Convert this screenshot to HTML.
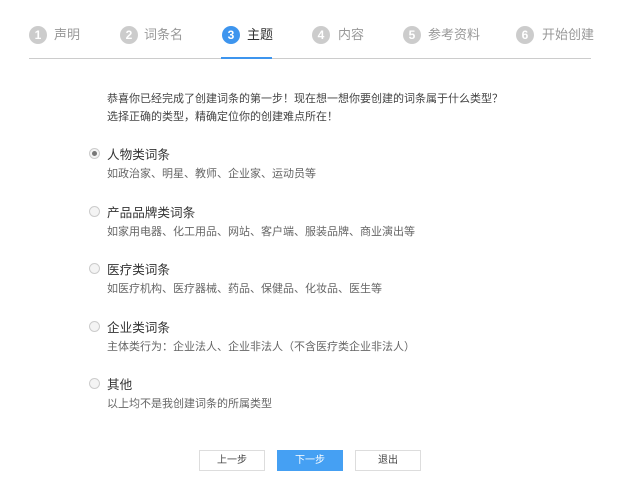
<!DOCTYPE html>
<html><head><meta charset="utf-8"><style>
body{margin:0;width:640px;height:484px;background:#fff;font-family:"Liberation Sans","Noto Sans CJK SC",sans-serif;position:relative;overflow:hidden}
.a{position:absolute;white-space:nowrap}
.c{position:absolute;top:26px;width:18px;height:18px;border-radius:50%;background:#ccc;color:#fff;font-size:12px;line-height:18px;text-align:center;font-weight:bold}
.s{position:absolute;top:26px;font-size:13px;line-height:18px;color:#999}
.r{position:absolute;left:89px;width:9px;height:9px;border:1px solid #ccc;border-radius:50%;background:#f4f4f4}
.t{position:absolute;left:107px;font-size:12.6px;color:#333}
.d{position:absolute;left:107px;font-size:11px;color:#666}
.b{position:absolute;top:450px;width:64px;height:19px;border:1px solid #ddd;font-size:10px;line-height:19px;text-align:center;color:#444;background:#fff}
</style></head><body>
<div class="c" style="left:29px">1</div><div class="s" style="left:54px">声明</div>
<div class="c" style="left:120px">2</div><div class="s" style="left:144px">词条名</div>
<div class="c" style="left:222px;background:#3e95ee">3</div><div class="s" style="left:247px;color:#333">主题</div>
<div class="c" style="left:312px">4</div><div class="s" style="left:338px">内容</div>
<div class="c" style="left:403px">5</div><div class="s" style="left:428px">参考资料</div>
<div class="c" style="left:516px">6</div><div class="s" style="left:542px">开始创建</div>
<div class="a" style="left:29px;top:58px;width:562px;height:1px;background:#ccc"></div>
<div class="a" style="left:221px;top:57px;width:51px;height:2px;background:#3e95ee"></div>
<div class="a" style="left:107px;top:90px;font-size:11px;line-height:18px;color:#444">恭喜你已经完成了创建词条的第一步！现在想一想你要创建的词条属于什么类型？<br>选择正确的类型，精确定位你的创建难点所在！</div>
<div class="r" style="top:148px"><div style="width:5px;height:5px;border-radius:50%;background:#777;margin:2px"></div></div>
<div class="t" style="top:144px">人物类词条</div><div class="d" style="top:165px">如政治家、明星、教师、企业家、运动员等</div>
<div class="r" style="top:206px"></div>
<div class="t" style="top:202px">产品品牌类词条</div><div class="d" style="top:223px">如家用电器、化工用品、网站、客户端、服装品牌、商业演出等</div>
<div class="r" style="top:263px"></div>
<div class="t" style="top:259px">医疗类词条</div><div class="d" style="top:280px">如医疗机构、医疗器械、药品、保健品、化妆品、医生等</div>
<div class="r" style="top:321px"></div>
<div class="t" style="top:317px">企业类词条</div><div class="d" style="top:338px">主体类行为：企业法人、企业非法人（不含医疗类企业非法人）</div>
<div class="r" style="top:378px"></div>
<div class="t" style="top:374px">其他</div><div class="d" style="top:395px">以上均不是我创建词条的所属类型</div>
<div class="b" style="left:199px">上一步</div>
<div class="b" style="left:277px;background:#45a0f3;border-color:#45a0f3;color:#fff">下一步</div>
<div class="b" style="left:355px">退出</div>
</body></html>
